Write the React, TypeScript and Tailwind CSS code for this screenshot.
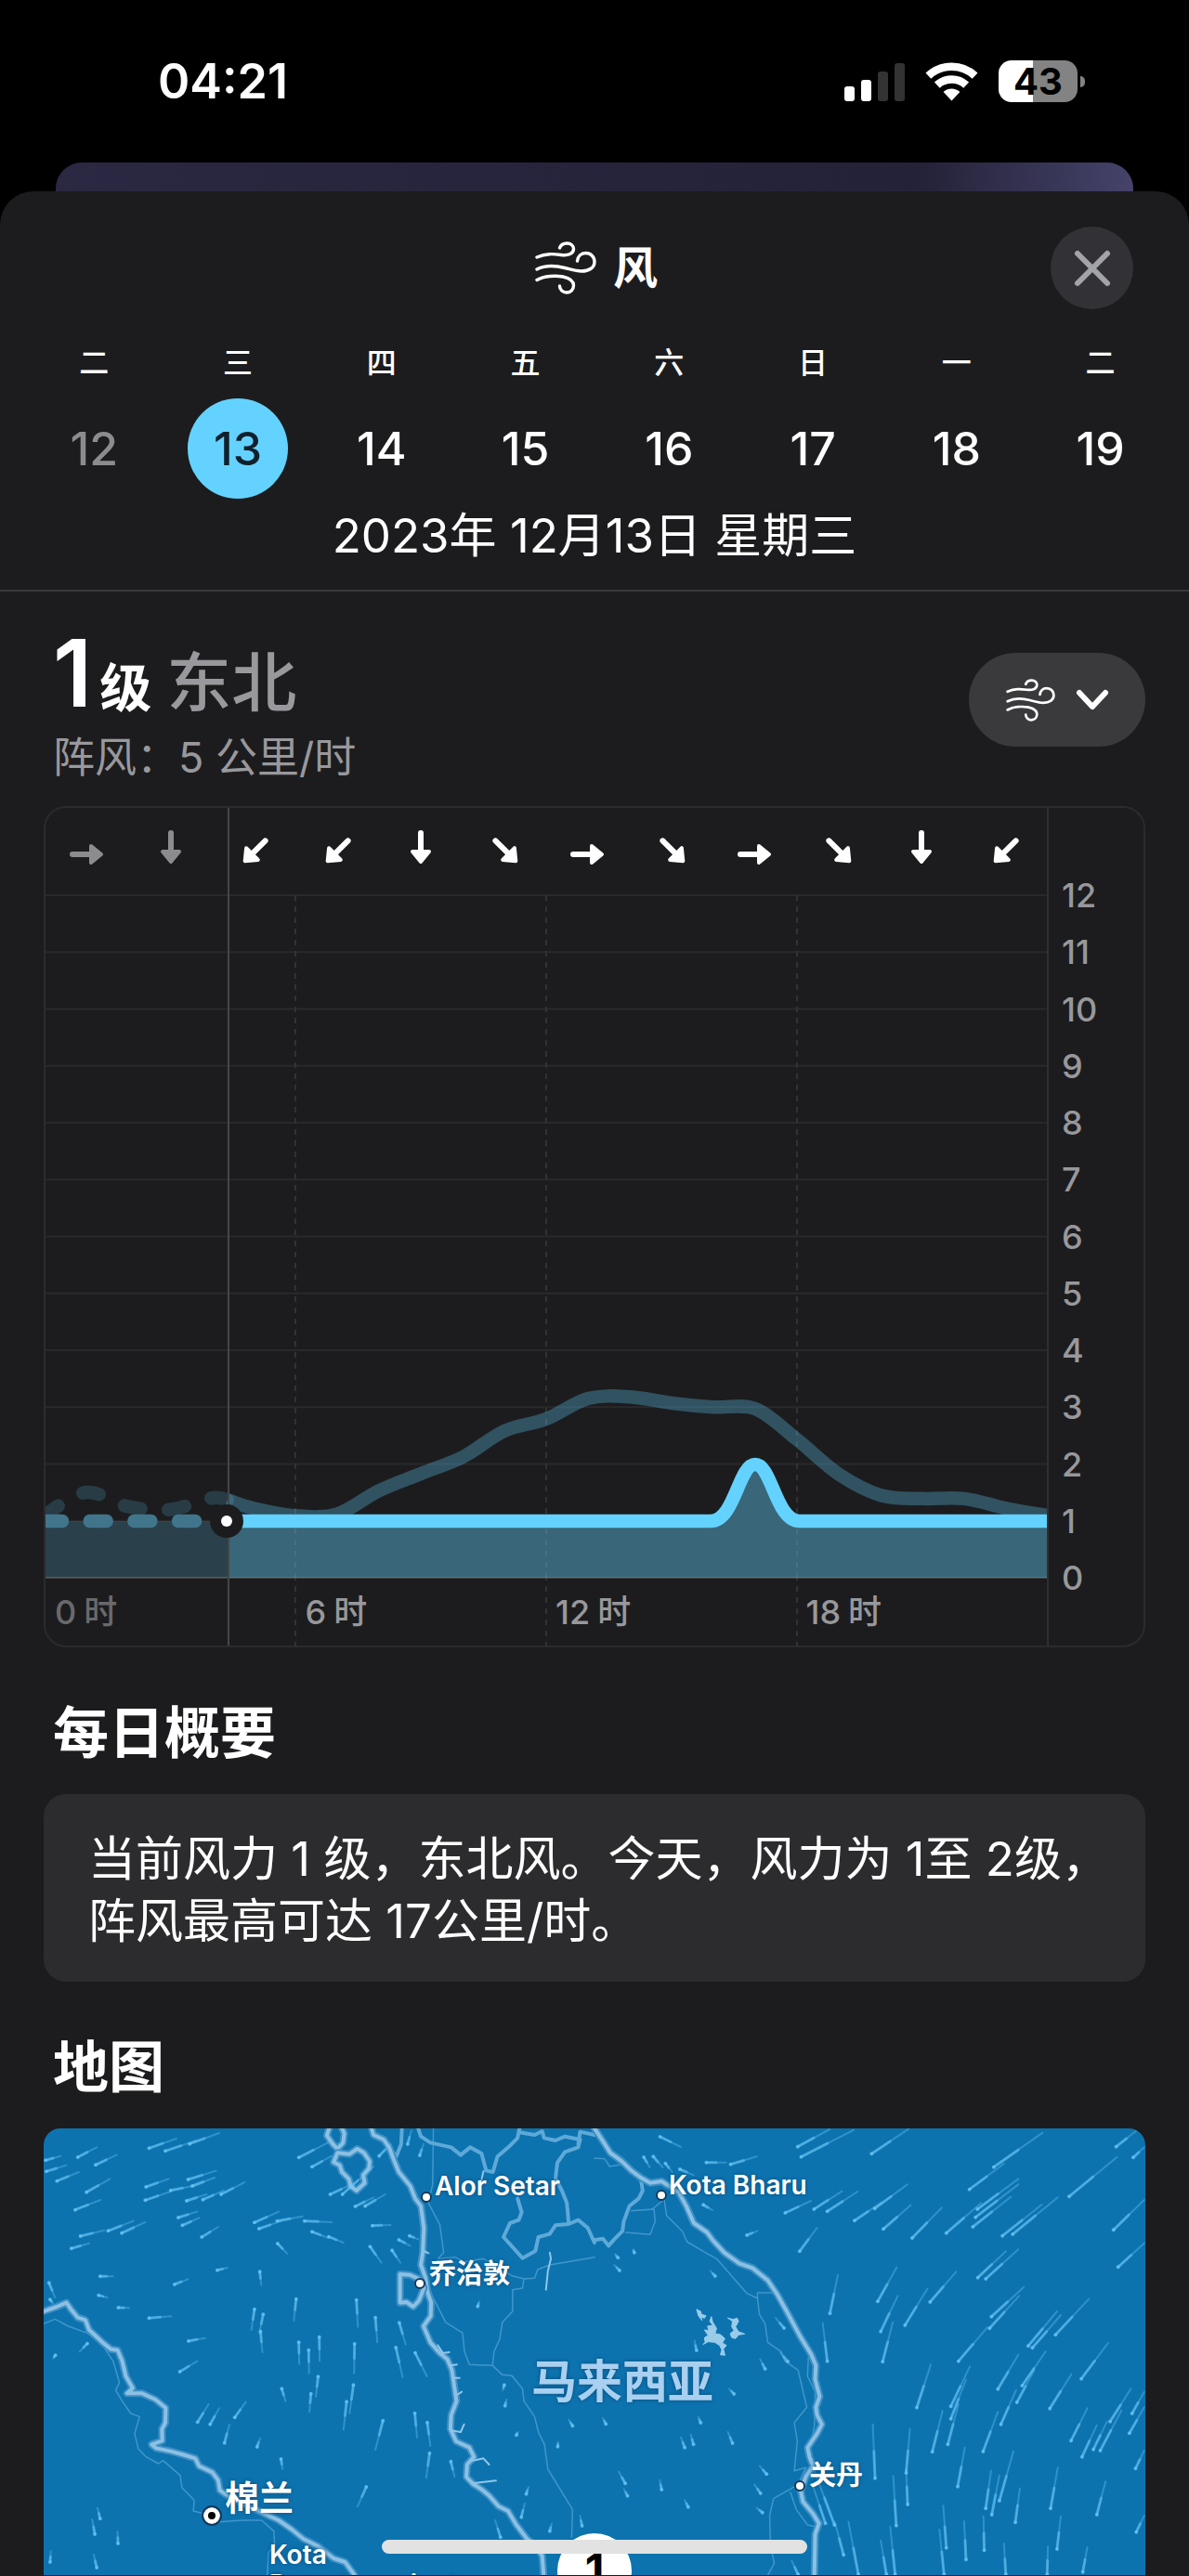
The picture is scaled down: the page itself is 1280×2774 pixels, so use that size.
import React from 'react';

type Direction = 'E' | 'S' | 'SW' | 'SE';

const DAYS = [
  { weekday: '二', date: 12, past: true },
  { weekday: '三', date: 13, selected: true },
  { weekday: '四', date: 14 },
  { weekday: '五', date: 15 },
  { weekday: '六', date: 16 },
  { weekday: '日', date: 17 },
  { weekday: '一', date: 18 },
  { weekday: '二', date: 19 },
];

const DIRECTIONS: Direction[] = ['E', 'S', 'SW', 'SW', 'S', 'SE', 'E', 'SE', 'E', 'SE', 'S', 'SW'];

const ARROW_TRANSFORM: Record<Direction, string> = {
  E: 'translate(21 30)',
  S: 'translate(22 22) rotate(90)',
  SW: 'translate(23 26) rotate(135)',
  SE: 'translate(23 26) rotate(45)',
};

const LEVELS = [12, 11, 10, 9, 8, 7, 6, 5, 4, 3, 2, 1, 0];

// [hour, level]
const PAST_GUSTS = [[0, 1.1], [1, 1.5], [2, 1.25], [3, 1.2], [4, 1.4], [4.37, 1.37]];
const GUSTS = [
  [4.37, 1.37], [5, 1.22], [6, 1.09], [7, 1.12], [8, 1.53], [9, 1.83], [10, 2.12], [11, 2.58],
  [12, 2.79], [13, 3.15], [14, 3.18], [15, 3.07], [16, 3], [17, 2.97], [18, 2.43], [19, 1.82],
  [20, 1.45], [21, 1.39], [22, 1.39], [23, 1.22], [24, 1.09],
];

const x = (hour: number) => hour * 45 - 1;
const y = (level: number) => 829 - level * 61.25;

const smoothPath = (points: number[][]) => {
  const p = points.map(([h, l]) => [x(h), y(l)]);
  let d = `M${p[0][0]} ${p[0][1]}`;
  for (let i = 0; i < p.length - 1; i++) {
    const a = p[i - 1] || p[i];
    const b = p[i];
    const c = p[i + 1];
    const e = p[i + 2] || c;
    d += `C${b[0] + (c[0] - a[0]) / 6} ${b[1] + (c[1] - a[1]) / 6} ${c[0] - (e[0] - b[0]) / 6} ${c[1] - (e[1] - b[1]) / 6} ${c[0]} ${c[1]}`;
  }
  return d;
};

const WIND_LINE = 'M196 768H716C742 768 746 707 764 707C782 707 786 768 812 768H1080';

// Wind particles on the map: head x, head y, tail x, tail y
const WEST_STREAKS = [
  [120, 202, 160, 188], [205, 192, 255, 160], [252, 217, 308, 184], [122, 238, 175, 218], [150, 269, 208, 240],
  [228, 305, 290, 262], [393, 163, 465, 132], [436, 172, 518, 138], [500, 149, 578, 114], [385, 288, 445, 262],
  [450, 299, 512, 284], [496, 264, 570, 236], [507, 285, 566, 258], [383, 331, 450, 303], [492, 333, 545, 312],
  [535, 329, 590, 300], [583, 312, 645, 273], [198, 362, 265, 330], [470, 387, 520, 368], [481, 412, 525, 388],
  [212, 447, 275, 428], [285, 430, 352, 398], [321, 437, 383, 402], [188, 487, 235, 470], [532, 450, 576, 417],
  [671, 403, 735, 368], [683, 423, 742, 398], [731, 398, 798, 383], [803, 398, 875, 402], [823, 433, 866, 453],
  [867, 449, 906, 468], [788, 193, 865, 145], [823, 223, 875, 188], [871, 312, 930, 278], [903, 312, 985, 222],
  [937, 351, 985, 322], [963, 350, 1016, 312], [1000, 188, 1030, 150], [982, 413, 1030, 411], [732, 471, 757, 503],
  [976, 481, 1006, 533], [1034, 493, 1056, 533], [1052, 459, 1082, 478], [1080, 446, 1103, 457], [264, 577, 298, 577],
  [573, 557, 600, 549], [460, 603, 496, 586], [685, 562, 689, 605], [312, 678, 341, 679], [393, 712, 452, 706],
  [671, 683, 663, 750], [694, 700, 684, 760], [687, 755, 692, 822], [781, 650, 775, 720], [940, 653, 944, 740],
  [990, 710, 995, 790], [1053, 727, 1070, 797], [842, 773, 843, 850], [788, 790, 789, 860], [814, 815, 815, 890],
  [935, 795, 934, 890], [1044, 807, 1062, 902], [1095, 824, 1126, 900], [497, 786, 541, 776], [474, 885, 520, 851],
  [839, 901, 833, 965], [743, 940, 753, 980], [820, 956, 816, 1015], [932, 928, 922, 1020], [914, 982, 906, 1072],
  [521, 1048, 550, 990], [554, 1055, 578, 1003], [619, 1033, 648, 983], [592, 1115, 605, 1055], [678, 1128, 686, 1100],
  [1010, 1043, 990, 1137], [1094, 1019, 1100, 1098], [1127, 1049, 1135, 1125], [1133, 1148, 1124, 1228],
  [1189, 1175, 1199, 1225], [741, 1167, 745, 1200], [966, 1257, 943, 1320], [250, 1410, 243, 1362],
  [264, 1360, 257, 1325], [311, 1440, 310, 1402], [255, 1518, 247, 1475], [132, 1500, 134, 1465],
  [129, 598, 145, 645], [132, 652, 140, 665], [260, 638, 283, 645], [146, 832, 140, 842], [230, 794, 210, 820],
  [1320, 1420, 1306, 1365], [1375, 1355, 1384, 1310], [1388, 1280, 1394, 1257], [1450, 1400, 1455, 1376],
  [1535, 1383, 1530, 1350], [1330, 928, 1326, 945], [1332, 995, 1336, 975], [1510, 1060, 1500, 1040],
  [1362, 1090, 1366, 1080], [1471, 1127, 1472, 1112], [1260, 674, 1264, 658], [1107, 186, 1117, 150], [1075, 150, 1085, 105],
];

const EAST_STREAKS = [
  [173, 126, 228, 159], [295, 209, 347, 209], [359, 215, 428, 190], [536, 158, 620, 102], [545, 191, 684, 104],
  [731, 181, 828, 101], [1053, 224, 1182, 113], [989, 296, 1080, 213], [1252, 319, 1378, 192], [1376, 158, 1430, 106],
  [1421, 193, 1450, 160], [503, 372, 571, 333], [579, 360, 653, 302], [614, 367, 694, 303], [739, 358, 825, 280],
  [686, 397, 757, 338], [762, 424, 834, 347], [838, 453, 916, 355], [541, 496, 587, 420], [402, 444, 430, 430],
  [1010, 360, 1118, 262], [1005, 386, 1118, 280], [998, 417, 1098, 320], [928, 437, 1020, 340], [1076, 446, 1180, 345],
  [1103, 441, 1222, 322], [1369, 427, 1450, 330], [1381, 547, 1450, 470], [1011, 581, 1085, 496], [1032, 585, 1118, 490],
  [621, 697, 642, 572], [747, 658, 797, 548], [885, 660, 954, 562], [755, 755, 800, 640], [819, 735, 878, 617],
  [760, 853, 787, 725], [614, 851, 602, 728], [1047, 707, 1132, 612], [1042, 745, 1120, 640], [960, 851, 1036, 742],
  [1144, 802, 1220, 690], [1155, 808, 1230, 702], [1216, 766, 1304, 650], [1064, 941, 1118, 830], [1128, 930, 1190, 820],
  [1114, 984, 1160, 880], [1284, 908, 1355, 792], [1201, 1004, 1258, 893], [850, 1001, 887, 862], [940, 997, 990, 868],
  [940, 1037, 980, 910], [891, 1144, 918, 1012], [932, 1120, 960, 990], [1072, 1055, 1112, 945], [1025, 1143, 1064, 1015],
  [1360, 1046, 1415, 940], [1418, 1020, 1450, 950], [1411, 1084, 1450, 1000], [1257, 1108, 1300, 1003],
  [1286, 1160, 1325, 1058], [1316, 1136, 1352, 1046], [1334, 1140, 1390, 1010], [1427, 1198, 1450, 1140],
  [740, 1229, 734, 1055], [822, 1212, 832, 1070], [958, 1256, 977, 1130], [1068, 1302, 1105, 1142], [826, 1314, 822, 1200],
  [796, 1382, 788, 1222], [1032, 1327, 1046, 1205], [1048, 1347, 1068, 1220], [1110, 1372, 1122, 1262],
  [1203, 1327, 1222, 1195], [1325, 1347, 1348, 1240], [1429, 1403, 1450, 1350], [928, 1454, 920, 1318],
  [980, 1492, 975, 1368], [1028, 1462, 1026, 1352], [1220, 1458, 1230, 1352], [1288, 1532, 1300, 1452],
  [633, 1380, 580, 1205], [609, 1375, 578, 1260], [657, 1477, 634, 1370], [696, 1540, 670, 1370], [770, 1540, 755, 1430],
  [793, 1540, 780, 1385], [922, 1540, 910, 1395], [1085, 1540, 1080, 1440], [1194, 1540, 1196, 1450], [537, 1540, 520, 1495],
  [130, 192, 146, 225], [155, 190, 180, 225], [187, 212, 205, 240], [225, 231, 262, 250], [287, 346, 311, 363],
  [500, 744, 478, 712], [510, 852, 490, 823], [450, 876, 437, 845], [368, 957, 355, 940], [364, 1116, 352, 1080],
  [269, 816, 264, 785], [238, 1130, 228, 1098], [261, 1120, 254, 1088], [30, 1054, 22, 1035], [280, 1050, 274, 1032],
  [81, 1246, 64, 1208], [177, 1266, 172, 1235], [87, 1286, 78, 1265], [247, 1322, 238, 1300], [454, 1216, 436, 1190],
  [438, 1278, 422, 1250], [443, 1340, 428, 1325], [62, 517, 54, 505], [66, 558, 52, 540], [105, 500, 102, 490], [318, 576, 306, 560],
];

const COASTS = [
  'M980 99L985 120L1012 135L1027 162L1040 205L1052 240L1082 285L1095 325L1110 350L1118 420L1115 500L1110 540L1122 580L1128 630L1137 660L1136 705L1117 738L1135 790L1160 825L1180 845L1192 880L1198 930L1204 980L1190 1025L1188 1070L1203 1110L1238 1130L1250 1160L1232 1185L1230 1225L1248 1248L1270 1265L1290 1285L1315 1320L1340 1335L1362 1380L1390 1425L1415 1450L1430 1480L1434 1542',
  'M1568 99L1590 140L1610 178L1640 205L1665 235L1690 258L1715 275L1745 270L1765 285L1790 305L1810 350L1830 405L1865 435L1880 460L1910 500L1950 535L1985 550L2025 590L2050 635L2075 690L2110 770L2140 830L2152 865L2150 910L2162 965L2152 1000L2155 1025L2168 1055L2155 1085L2130 1130L2135 1160L2145 1190L2125 1225L2112 1270L2118 1305L2145 1345L2160 1375L2150 1410L2148 1542',
  'M115 690L150 675L175 662L188 685L205 710L225 718L235 750L270 790L292 812L310 815L322 850L332 900L350 938L335 955L375 955L410 975L437 1002L436 1050L427 1070L428 1108L400 1120L412 1132L450 1142L480 1152L515 1165L525 1190L560 1210L575 1235L580 1268L605 1290L640 1310L700 1345L735 1365L770 1395L800 1425L840 1450L880 1488L910 1500L935 1542',
  'M868 99L862 122L878 150L890 165L905 145L908 115L902 99',
  'M890 178L922 182L942 165L960 178L975 205L973 228L958 250L962 275L940 300L925 285L920 262L902 240L896 218L880 208Z',
  'M1055 570L1080 572L1110 588L1118 615L1105 655L1090 675L1072 660L1055 662Z',
];

const BORDERS = [
  'M1060 99L1058 150L1045 190L1030 165',
  'M1103 99L1110 125L1135 145L1190 160L1215 185L1240 160L1270 180L1282 235L1300 240L1312 190L1345 155L1365 130L1370 99M1370 112L1410 120L1430 108L1435 130L1465 138L1490 125L1530 135L1525 160L1490 175L1470 210L1465 260L1482 300L1495 340L1500 405',
  'M1568 468L1550 420L1525 395L1500 408L1465 412L1450 440L1420 450L1412 495L1378 518L1328 450L1345 405L1368 395L1376 370L1365 325',
  'M1568 460L1590 455L1605 478L1618 460L1642 430L1645 400L1660 350L1685 325L1695 300L1690 260',
  'M1525 150L1530 110L1568 120',
];

const ROADS = [
  'M1143 99L1141 280L1130 340L1160 410L1170 500L1155 520L1200 515L1225 530L1275 520L1350 575L1382 585L1410 583L1418 555L1450 540L1568 515',
  'M1382 585L1378 615L1352 620L1352 690L1325 725L1318 780L1303 820L1299 865L1238 862L1225 820L1220 760L1175 725L1140 640L1128 600',
  'M1299 865L1325 895L1350 898L1378 940L1382 980L1410 1030L1420 1080L1436 1120L1445 1200L1510 1330L1508 1420',
  'M115 730L145 715L180 738L230 760L265 790L298 850L315 920L305 945L325 985L345 1020L368 1030L355 1085L365 1135L385 1160L418 1182L430 1172L475 1220L480 1260L512 1300L510 1335L558 1350L580 1370L640 1365L690 1365L722 1400L724 1440L708 1470L705 1542',
  'M1745 335L1720 360L1665 365L1725 360L1728 400L1715 442L1650 435M1752 330L1758 380L1800 432L1812 465L1860 500L1890 520L1970 632L1998 648L1998 630L2050 630M1998 648L2003 700L2018 730L2025 790L2060 820L2070 850L2105 880L2128 1000L2095 1050L2103 1110L2095 1205L2125 1195L2105 1250L2040 1295L2030 1350L2032 1440L2042 1505L2025 1542',
  'M1568 195L1595 197L1608 222L1640 215M2132 840L2130 900L2150 950L2148 1060L2140 1110M2085 1275L2100 1330L2130 1380L2150 1385',
];

const LAKES = [
  'M1838 684L1848 690L1850 700L1862 704L1858 712L1848 708L1852 720L1843 706ZM1876 708L1872 722L1880 735L1866 738L1870 752L1858 750L1868 768L1858 775L1860 790L1854 797L1868 788L1885 790L1898 800L1904 815L1900 830L1912 832L1908 812L1916 800L1905 792L1912 778L1900 765L1886 762L1890 745L1880 725ZM1920 712L1932 722L1930 740L1936 752L1926 762L1930 775L1940 778L1948 766L1964 763L1948 756L1940 740L1948 722L1944 712L1934 716Z',
];

const CREEKS = [
  'M1450 500L1453 520L1445 560L1440 620M1275 238L1270 265',
  'M1155 800L1168 825L1185 822M1190 865L1205 862M1198 905L1212 905M1205 960L1218 950M1190 1075L1215 1080L1224 1055M1248 1172L1275 1165L1290 1185M1250 1245L1308 1237M1118 495L1130 502',
];

const WindIcon = ({ className }: { className: string }) => (
  <svg className={className} viewBox="0 0 66 57" fill="none" stroke="currentColor" strokeWidth="3.4" strokeLinecap="round" aria-hidden="true">
    <path d="M2 17C12 12.5 20 13.5 28 14.5C36 15.5 41.5 13 41.5 8C41.5 4.5 38.5 2 34.5 2C30.5 2 27.5 4 26.5 7" />
    <path d="M2 30C12 25 22 26 32 28.5C40 30.5 44 32 50 32C58.5 32 64 28 64 22C64 16.5 60 12.5 54.5 12.5C49.5 12.5 46 16 45.5 21" />
    <path d="M2 41.5C10 37 22 36.5 30 38C37 39.5 41.5 42.5 41.5 47.5C41.5 52 38 55 34 55C30 55 26.5 52 26.5 48" />
  </svg>
);

const StatusBar = () => (
  <header className="flex h-[175px] items-center justify-between pr-[112px] pl-[170px]">
    <span className="text-[52px] leading-[60px] font-semibold">04:21</span>
    <div className="flex items-center gap-[22px]">
      <svg className="h-[42px] w-[65px]" viewBox="0 0 65 42" aria-label="信号">
        <rect x="0" y="26" width="11" height="16" rx="3" fill="#fff" />
        <rect x="18" y="19" width="11" height="23" rx="3" fill="#fff" />
        <rect x="36" y="10" width="11" height="32" rx="3" fill="#333" />
        <rect x="54" y="1" width="11" height="41" rx="3" fill="#333" />
      </svg>
      <svg className="h-[42px] w-[57px]" viewBox="0 0 57 42" fill="none" stroke="#fff" strokeWidth="8.5" aria-label="无线局域网">
        <path d="M3.4 14.6A36.8 36.8 0 0 1 53.6 14.6" />
        <path d="M12.8 24.7A23 23 0 0 1 44.2 24.7" />
        <path d="M28.5 41.5L19.6 32A13 13 0 0 1 37.4 32Z" fill="#fff" stroke="none" />
      </svg>
      <div className="flex items-center gap-[3px]">
        <div className="flex h-[45px] w-[85px] items-center justify-center rounded-[14px] bg-linear-to-r from-white from-43% to-[#838383] to-43% text-[40px] leading-[45px] font-bold text-black">
          43
        </div>
        <div className="h-3 w-[5px] rounded-r-full bg-[#838383]"></div>
      </div>
    </div>
  </header>
);

const DayPicker = () => (
  <nav className="mt-[38px] grid grid-cols-8 pr-[18px] pl-6">
    {DAYS.map((day) => (
      <button key={day.date} className="flex flex-col items-center gap-[18px]">
        <span className="text-[32px] leading-10 font-medium">{day.weekday}</span>
        <span
          className={`flex size-[108px] items-center justify-center rounded-full text-[50px] font-medium ${
            day.selected ? 'bg-[#64d2ff] text-[#10202c]' : day.past ? 'text-[#8c8c8f]' : 'text-white'
          }`}
        >
          {day.date}
        </span>
      </button>
    ))}
  </nav>
);

const WindChart = () => (
  <section className="mt-6 flex overflow-hidden rounded-3xl border-2 border-[#2b2b2d]">
    <div className="grid flex-1">
      <svg className="col-start-1 row-start-1 w-full" viewBox="0 0 1078 902" aria-label="风力图表">
        {LEVELS.map((level) => (
          <path key={level} d={`M0 ${y(level)}H1078`} stroke="#29292b" strokeWidth="2" />
        ))}
        {[6, 12, 18].map((hour) => (
          <path key={hour} d={`M${x(hour)} 94V902`} stroke="#323234" strokeWidth="2" strokeDasharray="6 6" />
        ))}

        {/* Gusts */}
        <g fill="none" stroke="#64d2ff" strokeWidth="14.5">
          <path d={smoothPath(PAST_GUSTS)} strokeOpacity="0.18" strokeLinecap="round" strokeDasharray="18 29.7" />
          <path d={smoothPath(GUSTS)} strokeOpacity="0.3" />
        </g>

        {/* Wind force */}
        <path d="M0 768H196V829H0Z" fill="#64d2ff" fillOpacity="0.2" />
        <path d={`${WIND_LINE}V829H196Z`} fill="#396679" />
        {[6, 12, 18].map((hour) => (
          <path key={hour} d={`M${x(hour)} 776V829`} stroke="#47717f" strokeWidth="2" strokeDasharray="6 6" />
        ))}
        <path d="M0 829H1078" stroke="#fff" strokeOpacity="0.12" strokeWidth="2" />
        <path d="M0 768H170" stroke="#40758c" strokeWidth="14.5" strokeLinecap="round" strokeDasharray="18 29.7" />
        <path d="M197 0V902" stroke="#464648" strokeWidth="2" />
        <path d={WIND_LINE} fill="none" stroke="#64d2ff" strokeWidth="14.5" />
        <circle cx="195" cy="768" r="18" fill="#1c1c1e" />
        <circle cx="195" cy="768" r="6" fill="#fff" />
      </svg>

      <div className="col-start-1 row-start-1 flex flex-col justify-between pt-5 pb-4">
        <div className="grid grid-cols-12 justify-items-center">
          {DIRECTIONS.map((direction, i) => (
            <svg key={i} className={`h-[52px] w-11 ${i < 2 ? 'text-[#8c8c8e]' : 'text-white'}`} viewBox="0 0 44 52" aria-label={direction}>
              <g transform={ARROW_TRANSFORM[direction]} stroke="currentColor" strokeLinecap="round" strokeLinejoin="round">
                <path d="M-15 0H6" strokeWidth="6" />
                <path d="M5 -9L16 0L5 9Z" fill="currentColor" strokeWidth="4" />
              </g>
            </svg>
          ))}
        </div>
        <div className="grid grid-cols-4 text-[36px] leading-10 font-medium text-[#98989b]">
          {[0, 6, 12, 18].map((hour) => (
            <span key={hour} className={`flex gap-2 pl-[10px] ${hour === 0 ? 'text-[#69696c]' : ''}`}>
              {hour}
              <span>时</span>
            </span>
          ))}
        </div>
      </div>
    </div>
    <div className="flex w-[104px] flex-col justify-between border-l-2 border-[#2f2f31] pt-[74px] pb-[53px] pl-[14px] text-[36px] leading-10 font-medium text-[#98989b]">
      {LEVELS.map((level) => (
        <span key={level}>{level}</span>
      ))}
    </div>
  </section>
);

const Streaks = ({ items }: { items: number[][] }) => (
  <>
    {items.map(([hx, hy, tx, ty], i) => (
      <g key={i}>
        <path d={`M${hx} ${hy}L${tx} ${ty}`} strokeWidth="2" strokeOpacity="0.35" vectorEffect="non-scaling-stroke" />
        <path d={`M${hx} ${hy}L${(hx + tx) / 2} ${(hy + ty) / 2}`} strokeWidth="3" strokeOpacity="0.5" vectorEffect="non-scaling-stroke" />
        <path d={`M${hx} ${hy}l.1 0`} strokeWidth="4" strokeOpacity="0.6" vectorEffect="non-scaling-stroke" />
      </g>
    ))}
  </>
);

const WindMap = () => (
  <section className="relative h-[481px] overflow-hidden rounded-t-[18px] bg-[#0d73af] [text-shadow:0_0_4px_#084a78]">
    <svg className="h-full w-full" viewBox="115 99 2906 1443" preserveAspectRatio="none" fill="none" strokeLinejoin="round" strokeLinecap="round" aria-label="风力地图">
      {ROADS.map((d) => (
        <path key={d} d={d} stroke="#3f97ca" strokeWidth="1.5" vectorEffect="non-scaling-stroke" />
      ))}
      {BORDERS.map((d) => (
        <path key={d} d={d} stroke="#5ea9d8" strokeWidth="4" vectorEffect="non-scaling-stroke" />
      ))}
      {COASTS.map((d) => (
        <g key={d}>
          <path d={d} stroke="#3d8fc4" strokeWidth="8" vectorEffect="non-scaling-stroke" />
          <path d={d} stroke="#8cc0e3" strokeWidth="4" vectorEffect="non-scaling-stroke" />
        </g>
      ))}
      {LAKES.map((d) => (
        <path key={d} d={d} fill="#9accea" stroke="#9accea" strokeWidth="1" vectorEffect="non-scaling-stroke" />
      ))}
      {CREEKS.map((d) => (
        <path key={d} d={d} stroke="#8fc6e8" strokeWidth="2" vectorEffect="non-scaling-stroke" />
      ))}
      <g stroke="#6fcbfb">
        <Streaks items={WEST_STREAKS} />
        <g transform="translate(1568 0)">
          <Streaks items={EAST_STREAKS} />
        </g>
      </g>
    </svg>

    {/* City markers */}
    <i className="absolute top-[68px] left-[406px] size-3 rounded-full border-2 border-[#123a5c] bg-white"></i>
    <i className="absolute top-[66px] left-[659px] size-3 rounded-full border-2 border-[#123a5c] bg-white"></i>
    <i className="absolute top-[161px] left-[399px] size-3 rounded-full border-2 border-[#123a5c] bg-white"></i>
    <i className="absolute top-[379px] left-[808px] size-3 rounded-full border-2 border-[#123a5c] bg-white"></i>
    <i className="absolute top-[408px] left-[172px] size-[18px] rounded-full border-[5px] border-white bg-black outline-2 outline-[#123a5c]"></i>

    <span className="absolute top-[46px] left-[421px] text-[28px] leading-8 font-semibold">Alor Setar</span>
    <span className="absolute top-[45px] left-[673px] text-[28px] leading-8 font-semibold">Kota Bharu</span>
    <span className="absolute top-[141px] left-[415px] text-[29px] leading-8 font-bold">乔治敦</span>
    <span className="absolute top-[375px] left-[195px] text-[37px] leading-[48px] font-bold">棉兰</span>
    <span className="absolute top-[443px] left-[243px] text-[28px] leading-8 font-semibold">
      Kota
      <br />
      Pematangsiantar
    </span>
    <span className="absolute top-[249px] left-[525px] text-[49px] leading-[48px] font-bold text-[#a9d0f0]">马来西亚</span>
    <span className="absolute top-[358px] left-[824px] text-[29px] leading-8 font-bold">关丹</span>

    <div className="absolute top-[436px] left-1/2 flex size-20 -translate-x-1/2 items-center justify-center rounded-full bg-white text-[48px] font-bold text-black [text-shadow:none]">
      1
    </div>
  </section>
);

const App: React.FC = () => {
  return (
    <div className="flex min-h-screen w-full flex-col overflow-hidden bg-black font-['Inter','Noto_Sans_CJK_SC',sans-serif] text-white">
      <StatusBar />

      {/* Page behind the sheet */}
      <div className="mx-[60px] h-[31px] rounded-t-[28px] bg-linear-to-r from-[#2a2842] via-[#242238] via-80% to-[#45436a]"></div>

      <main className="flex-1 rounded-t-[36px] bg-[#1c1c1e] pt-[38px]">
        <div className="grid grid-cols-[1fr_auto_1fr] items-center px-[60px]">
          <h1 className="col-start-2 flex items-center gap-[18px] pl-1 text-[48px] leading-[60px] font-bold">
            <WindIcon className="h-[57px] w-[66px]" />
            风
          </h1>
          <button className="flex size-[89px] items-center justify-center justify-self-end rounded-full bg-[#323236]" aria-label="关闭">
            <svg className="size-[42px]" viewBox="0 0 42 42" stroke="#a3a3aa" strokeWidth="6" strokeLinecap="round">
              <path d="M5 5L37 37M37 5L5 37" />
            </svg>
          </button>
        </div>

        <DayPicker />
        <p className="mt-[10px] border-b-2 border-[#38383a] pb-7 text-center text-[51px] leading-[60px]">2023年 12月13日 星期三</p>

        <div className="px-[47px] pt-[38px]">
          <div className="flex items-start justify-between pl-[10px]">
            <div>
              <div className="flex items-baseline gap-2 font-medium">
                <span className="text-[100px] leading-[100px] font-semibold">1</span>
                <span className="text-[56px] leading-[72px] font-bold">级</span>
                <span className="pl-2 text-[70px] leading-[72px] text-[#98989d]">东北</span>
              </div>
              <p className="mt-[11px] text-[45px] leading-[56px] text-[#98989d]">阵风：5 公里/时</p>
            </div>
            <button className="mt-7 flex h-[101px] w-[190px] items-center justify-center gap-[22px] rounded-full bg-[#3a3a3d]" aria-label="显示选项">
              <WindIcon className="h-[46px] w-[53px]" />
              <svg className="h-6 w-9" viewBox="0 0 36 24" fill="none" stroke="#fff" strokeWidth="6" strokeLinecap="round" strokeLinejoin="round">
                <path d="M4 4L18 19L32 4" />
              </svg>
            </button>
          </div>

          <WindChart />

          <h2 className="mt-14 mb-[30px] pl-[10px] text-[60px] leading-[72px] font-bold">每日概要</h2>
          <p className="rounded-3xl bg-[#2c2c2e] pt-9 pr-8 pb-8 pl-12 text-[51px] leading-[67px]">
            当前风力 1 级，东北风。今天，风力为 1至 2级，阵风最高可达 17公里/时。
          </p>

          <h2 className="mt-14 mb-[30px] pl-[10px] text-[60px] leading-[72px] font-bold">地图</h2>
          <WindMap />
        </div>
      </main>

      {/* Home indicator */}
      <div className="fixed bottom-6 left-1/2 h-[15px] w-[458px] -translate-x-1/2 rounded-full bg-[#e2e2e2]"></div>
    </div>
  );
};

export default App;
